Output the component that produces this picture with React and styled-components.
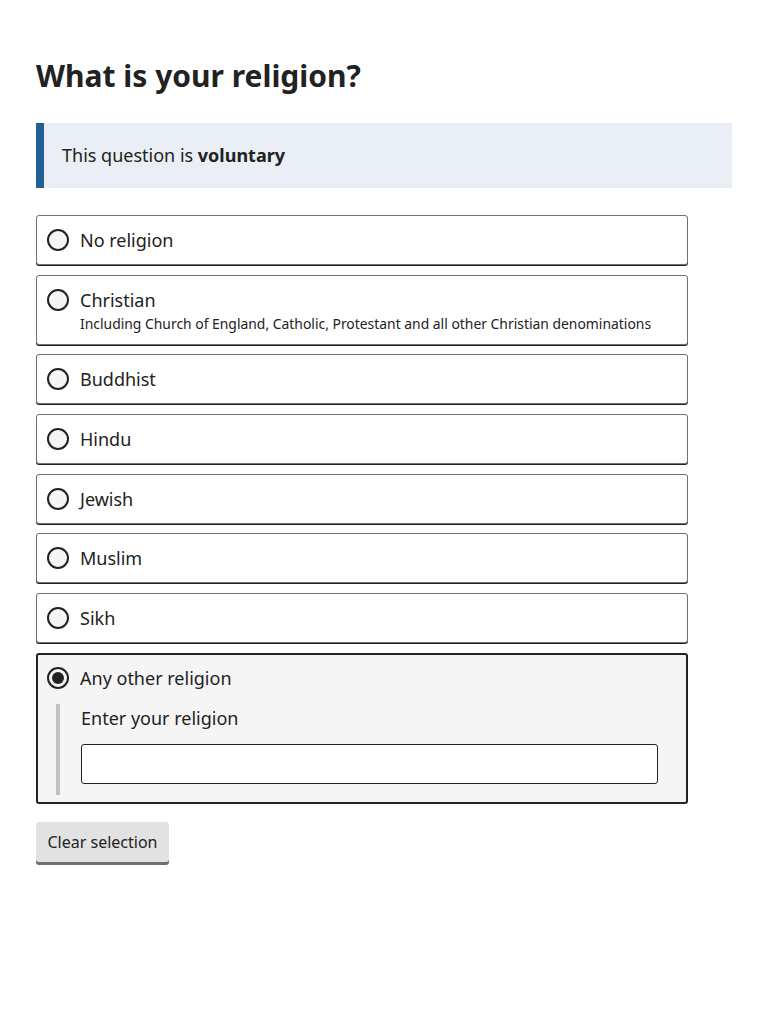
import styled, { createGlobalStyle } from 'styled-components';
import { useState } from 'react';

const GlobalStyle = createGlobalStyle`
  body {
    margin: 0;
    font-family: "Noto Sans", "Open Sans", sans-serif;
    color: #222222;
    background: #ffffff;
  }
  * { box-sizing: border-box; }
`

const options = [
  { id: 'none', label: 'No religion' },
  { id: 'christian', label: 'Christian', hint: 'Including Church of England, Catholic, Protestant and all other Christian denominations' },
  { id: 'buddhist', label: 'Buddhist' },
  { id: 'hindu', label: 'Hindu' },
  { id: 'jewish', label: 'Jewish' },
  { id: 'muslim', label: 'Muslim' },
  { id: 'sikh', label: 'Sikh' },
  { id: 'other', label: 'Any other religion', other: true },
]

const App = () => {
  const [selected, setSelected] = useState('other')

  return (
    <>
      <GlobalStyle />
      <Page>
        <Heading>What is your religion?</Heading>
        <Panel>
          This question is <strong>voluntary</strong>
        </Panel>
        <RadioList>
          {options.map(opt => {
            const checked = selected === opt.id
            return (
              <RadioCard key={opt.id} checked={checked} onClick={() => setSelected(opt.id)}>
                <Row>
                  <RadioCircle checked={checked} />
                  <Texts>
                    <Label>{opt.label}</Label>
                    {opt.hint && <Hint>{opt.hint}</Hint>}
                  </Texts>
                </Row>
                {opt.other && checked && (
                  <OtherField>
                    <FieldLabel>Enter your religion</FieldLabel>
                    <TextInput type="text" />
                  </OtherField>
                )}
              </RadioCard>
            )
          })}
        </RadioList>
        <ClearButton onClick={() => setSelected(null)}>Clear selection</ClearButton>
      </Page>
    </>
  )
}

export default App;

const Page = styled.div`
  padding: 55px 36px 40px;
  display: flex;
  flex-direction: column;
  align-items: flex-start;
`

const Heading = styled.h1`
  margin: 0 0 26px;
  font-size: 30px;
  line-height: 1.4;
  font-weight: 700;
  color: #222222;
`

const Panel = styled.div`
  width: 696px;
  background: #e9eff4;
  border-left: 8px solid #206095;
  padding: 18px 18px 19px;
  font-size: 18px;
  line-height: 28px;
  color: #222222;
  strong { font-weight: 700; }
`

const RadioList = styled.div`
  margin-top: 27px;
  width: 652px;
  display: flex;
  flex-direction: column;
  gap: 9.7px;
`

const RadioCard = styled.div`
  border: ${p => p.checked ? '2px solid #222222' : '1px solid #707071'};
  box-shadow: ${p => p.checked ? 'none' : '0 1px 0 0 #222222'};
  border-radius: 3px;
  background: ${p => p.checked ? '#f5f5f6' : '#ffffff'};
  padding: ${p => p.checked ? '10px 28px 7px 9px' : '11px 11px 10px 10px'};
  cursor: pointer;
`

const Row = styled.div`
  display: flex;
  align-items: flex-start;
  gap: 11px;
`

const RadioCircle = styled.span`
  flex: none;
  width: 22px;
  height: 22px;
  margin-top: 2px;
  border-radius: 50%;
  border: 2px solid #222222;
  background: #f5f5f6;
  display: flex;
  align-items: center;
  justify-content: center;
  &::after {
    content: '';
    display: ${p => p.checked ? 'block' : 'none'};
    width: 12px;
    height: 12px;
    border-radius: 50%;
    background: #222222;
  }
`

const Texts = styled.div`
  display: flex;
  flex-direction: column;
`

const Label = styled.span`
  font-size: 18px;
  line-height: 27px;
  color: #222222;
`

const Hint = styled.span`
  font-size: 13.9px;
  line-height: 20px;
  color: #222222;
`

const OtherField = styled.div`
  margin: 12px 0 0 9px;
  border-left: 4px solid #bfc1c3;
  padding: 1px 0 11px 21px;
`

const FieldLabel = styled.div`
  font-size: 18px;
  line-height: 27px;
  color: #222222;
  margin-bottom: 12px;
`

const TextInput = styled.input`
  display: block;
  width: 100%;
  height: 40px;
  border: 1px solid #222222;
  border-radius: 3px;
  background: #ffffff;
  font-family: inherit;
  font-size: 18px;
`

const ClearButton = styled.button`
  margin-top: 18px;
  height: 40px;
  padding: 0 11.5px;
  border: none;
  border-radius: 3px;
  background: #e2e2e3;
  box-shadow: 0 3px 0 0 #707071;
  font-family: inherit;
  font-size: 16px;
  color: #222222;
  cursor: pointer;
`
